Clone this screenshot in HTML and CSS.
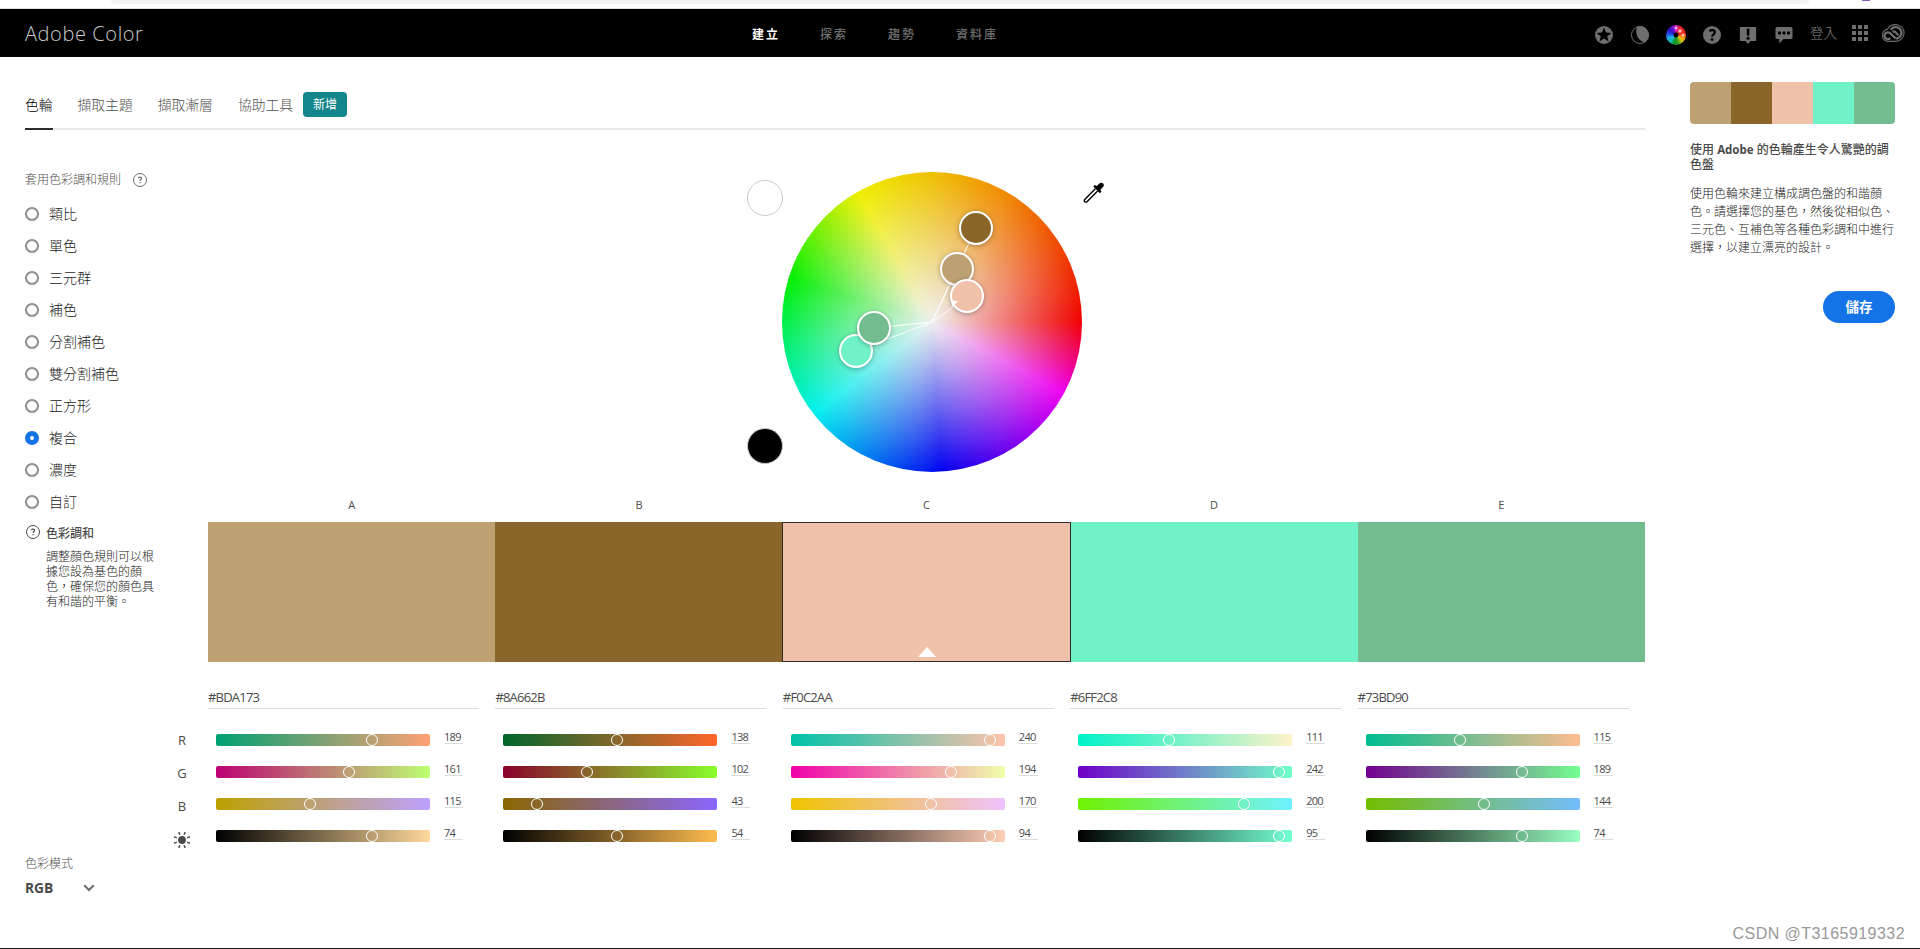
FILE: index.html
```html
<!DOCTYPE html>
<html lang="zh-TW">
<head>
    <meta charset="UTF-8">
    <meta name="viewport" content="width=device-width, initial-scale=1.0">
    <title>Adobe Color</title>
    <link rel="stylesheet" href="styles.css">
</head>
<body>
    <div class="browser-edge">
        <div class="address-bar"></div>
        <div class="avatar"></div>
    </div>

    <header class="header">
        <div class="logo">Adobe Color</div>
        <nav class="nav">
            <a class="active">建立</a>
            <a>探索</a>
            <a>趨勢</a>
            <a>資料庫</a>
        </nav>
        <div class="tools">
            <svg width="18" height="18" viewBox="0 0 18 18"><circle cx="9" cy="9" r="9" fill="#6e6e6e"/><path d="M9 1.500l2 5.100 5.400.3-4.200 3.400 1.400 5.300L9 12.600l-4.600 3 1.400-5.300-4.200-3.400 5.400-.3z" fill="#000"/></svg>
            <svg width="18" height="18" viewBox="0 0 18 18"><circle cx="9" cy="9" r="8.500" fill="none" stroke="#6e6e6e"/><path d="M6 .5C3.500 8 7 14 13.500 16.700A9 9 0 0 0 6 .5z" fill="#6e6e6e"/></svg>
            <div class="color-icon"></div>
            <svg width="18" height="18" viewBox="0 0 18 18"><circle cx="9" cy="9" r="9" fill="#6e6e6e"/><path d="M6.300 5.200C8 3.700 11.800 3.700 11.800 6.300c0 2-2.600 2.200-2.600 4.400" fill="none" stroke="#000" stroke-width="2.200"/><circle cx="9.100" cy="13.500" r="1.400" fill="#000"/></svg>
            <svg width="18" height="18" viewBox="0 0 18 18"><path d="M1.500 1h15a.6.6 0 0 1 .6.600v12.800a.6.6 0 0 1-.6.600H11.500L9 18l-2.500-3h-5a.6.6 0 0 1-.6-.6V1.600a.6.6 0 0 1 .6-.6z" fill="#6e6e6e"/><path d="M7.600 2.800h3L10.200 9.800H8z"/><circle cx="9.100" cy="12.300" r="1.600"/></svg>
            <svg width="18" height="18" viewBox="0 0 18 18"><path d="M2 1h14a1.500 1.500 0 0 1 1.500 1.500v9A1.500 1.500 0 0 1 16 13H8.500L4.200 17.500V13H2A1.500 1.500 0 0 1 .5 11.500v-9A1.500 1.500 0 0 1 2 1z" fill="#6e6e6e"/><circle cx="4.500" cy="7" r="1.700"/><circle cx="9" cy="7" r="1.700"/><circle cx="13.500" cy="7" r="1.700"/></svg>
            <span class="login">登入</span>
            <svg class="apps" width="16" height="16" viewBox="0 0 16 16" fill="#6e6e6e"><path d="M0 0h4v4H0zM6 0h4v4H6zM12 0h4v4h-4zM0 6h4v4H0zM6 6h4v4H6zM12 6h4v4h-4zM0 12h4v4H0zM6 12h4v4H6zM12 12h4v4h-4z"/></svg>
            <svg class="cloud" width="24" height="18" viewBox="0 0 24 18" fill="none" stroke="#6e6e6e"><path d="M6.800 17.400A6.200 6.200 0 0 1 6.500 5.200C8 2.300 11 .6 14.700.6a8.400 8.400 0 0 1 0 16.800z" stroke-width="1.100"/><path d="M14.500 14.300 9.300 9.300a3.400 3.400 0 1 0 0 4.800" stroke-width="2.300"/><path d="M9.800 6A5.700 5.700 0 1 1 14.700 14.600M17.500 11.200 14.500 8.200a2 2 0 0 0-2.800 0" stroke-width="2.300"/></svg>
        </div>
    </header>

    <div class="page">
        <main class="main">
            <div class="tabs">
                <a class="tab active">色輪</a>
                <a class="tab">擷取主題</a>
                <a class="tab">擷取漸層</a>
                <a class="tab">協助工具</a>
                <span class="badge">新增</span>
            </div>

            <div class="workspace">
                <aside class="sidebar">
                    <div class="rule-title">
                        套用色彩調和規則
                        <svg class="help" width="14" height="14" viewBox="0 0 14 14"><circle cx="7" cy="7" r="6.500"/><path d="M5.400 5.200c.4-1.400 3.200-1.400 3.200.1 0 1.200-1.500 1.200-1.500 2.700M7.100 9v1.300" stroke-width="1.200"/></svg>
                    </div>
                    <ul class="rules">
                        <li>類比</li>
                        <li>單色</li>
                        <li>三元群</li>
                        <li>補色</li>
                        <li>分割補色</li>
                        <li>雙分割補色</li>
                        <li>正方形</li>
                        <li class="checked">複合</li>
                        <li>濃度</li>
                        <li>自訂</li>
                    </ul>
                    <div class="tip">
                        <svg class="help dark" width="14" height="14" viewBox="0 0 14 14"><circle cx="7" cy="7" r="6.500"/><path d="M5.400 5.200c.4-1.400 3.200-1.400 3.200.1 0 1.200-1.500 1.200-1.500 2.700M7.100 9v1.300" stroke-width="1.200"/></svg>
                        <div>
                            <h4>色彩調和</h4>
                            <p>調整顏色規則可以根據您設為基色的顏色，確保您的顏色具有和諧的平衡。</p>
                        </div>
                    </div>
                    <div class="mode-title">色彩模式</div>
                    <div class="mode">
                        RGB
                        <svg width="12" height="8" viewBox="0 0 12 8"><path d="M1.200 1.200 6 6l4.800-4.800" fill="none" stroke="#6e6e6e" stroke-width="2"/></svg>
                    </div>
                </aside>

                <section class="content">
                    <div class="wheel-row">
                        <div class="backgrounds">
                            <span class="bg-dot white"></span>
                            <span class="bg-dot black"></span>
                        </div>
                        <div class="wheel">
                            <svg class="spokes" width="300" height="300" viewBox="0 0 300 300"><path d="M150 150 194 56M150 150 175 97M150 150 184 126M150 150 74 179M150 150 92 156"/></svg>
                            <span class="marker marker-b"></span>
                            <span class="marker marker-a"></span>
                            <span class="marker marker-c"></span>
                            <span class="marker marker-d"></span>
                            <span class="marker marker-e"></span>
                        </div>
                        <svg class="dropper" width="22" height="22" viewBox="0 0 22 22"><path d="M12.300 6.800 2.200 16.900c-1 1-1.200 2-.5 2.800.8.700 1.800.5 2.800-.5L14.600 9.100" fill="#fff" stroke="#000" stroke-width="1.400"/><path d="M10.300 4.500 11.800 3l2 1L16.700 1.300C19-.6 22 2 20.400 4.500L17.400 7.700l1 2-1.500 1.500z" fill="#000"/></svg>
                    </div>

                    <div class="columns letters">
                        <span>A</span><span>B</span><span>C</span><span>D</span><span>E</span>
                    </div>
                    <div class="columns swatches" id="swatches"></div>

                    <div class="editor">
                        <div class="channels">
                            <span>R</span>
                            <span>G</span>
                            <span>B</span>
                            <svg width="18" height="18" viewBox="-9 -9 18 18"><circle r="3.900" fill="#4b4b4b"/><path d="M2.100-5.200 3.200-7.900M-2.100-5.200-3.200-7.900M2.100 5.200 3.200 7.900M-2.100 5.200-3.200 7.900M5.200-2.100 7.900-3.200M5.200 2.100 7.900 3.200M-5.200-2.100-7.900-3.200M-5.200 2.100-7.900 3.200" stroke="#4b4b4b" stroke-width="1.500"/></svg>
                        </div>
                        <div class="columns panels" id="panels"></div>
                    </div>
                </section>
            </div>
        </main>

        <aside class="theme">
            <div class="palette" id="palette"></div>
            <h3>使用 <b>Adobe</b> 的色輪產生令人驚艷的調色盤</h3>
            <p>使用色輪來建立構成調色盤的和諧顏色。請選擇您的基色，然後從相似色、三元色、互補色等各種色彩調和中進行選擇，以建立漂亮的設計。</p>
            <button>儲存</button>
        </aside>
    </div>

    <div class="watermark">CSDN @T3165919332</div>
    <script src="script.js"></script>
</body>
</html>
```
FILE: script.js
```js
const colors = [
    { rgb: [189, 161, 115], brightness: 74 },
    { rgb: [138, 102, 43], brightness: 54 },
    { rgb: [240, 194, 170], brightness: 94, selected: true },
    { rgb: [111, 242, 200], brightness: 95 },
    { rgb: [115, 189, 144], brightness: 74 }
];

const swatches = document.getElementById('swatches');
const panels = document.getElementById('panels');
const palette = document.getElementById('palette');

function css(rgb) {
    return 'rgb(' + rgb.join(',') + ')';
}

function hex(rgb) {
    return '#' + rgb.map(v => v.toString(16).padStart(2, '0')).join('').toUpperCase();
}

function slider(from, to, percent, value) {
    return `<div class="slider">
        <div class="track" style="background: linear-gradient(to right, ${css(from)}, ${css(to)})">
            <span class="knob" style="left: ${percent}%"></span>
        </div>
        <span class="value">${value}</span>
    </div>`;
}

colors.forEach(color => {
    const rgb = color.rgb;
    swatches.innerHTML += `<div class="swatch${color.selected ? ' selected' : ''}" style="background: ${css(rgb)}"></div>`;
    palette.innerHTML += `<span style="background: ${css(rgb)}"></span>`;

    let html = `<div class="hex">${hex(rgb)}</div>`;
    // RGB 滑桿
    rgb.forEach((value, i) => {
        const from = rgb.slice();
        const to = rgb.slice();
        from[i] = 0;
        to[i] = 255;
        html += slider(from, to, value / 255 * 100, value);
    });
    // 亮度滑桿
    const max = Math.max(...rgb);
    html += slider([0, 0, 0], rgb.map(v => Math.round(v / max * 255)), color.brightness, color.brightness);
    panels.innerHTML += `<div class="panel">${html}</div>`;
});
```
FILE: styles.css
```css
*, *::before, *::after {
    box-sizing: border-box;
}
body {
    margin: 0;
    height: 949px;
    overflow: hidden;
    position: relative;
    display: flex;
    flex-direction: column;
    background-color: #fff;
    border-bottom: 1px solid #1c1c1c;
    color: #4b4b4b;
    font-family: "Noto Sans", "Noto Sans CJK TC", sans-serif;
    font-size: 12px;
}
h3, h4, p, ul {
    margin: 0;
    padding: 0;
}
.browser-edge {
    height: 9px;
    flex-shrink: 0;
    display: flex;
    align-items: flex-start;
    padding-left: 111px;
    border-bottom: 1px solid #dadce0;
}
.address-bar {
    width: 1698px;
    height: 4px;
    background-color: #f1f3f4;
    border-radius: 0 0 8px 8px;
}
.avatar {
    width: 8px;
    height: 1px;
    margin-left: 53px;
    background-color: #7e57c2;
}

/* 頂部導覽 */
.header {
    height: 48px;
    flex-shrink: 0;
    display: grid;
    grid-template-columns: 752px 1fr auto;
    align-items: center;
    padding-right: 15px;
    background-color: #000;
}
.logo {
    padding-left: 25px;
    color: #cacaca;
    font-family: "Open Sans", sans-serif;
    font-size: 20px;
    font-weight: 300;
    letter-spacing: 0.6px;
}
.nav {
    display: flex;
    gap: 40px;
    padding-top: 2px;
    color: #6e6e6e;
    font-weight: 500;
    letter-spacing: 2px;
}
.nav .active {
    color: #fff;
    font-weight: 700;
}
.tools {
    display: flex;
    align-items: center;
    gap: 18px;
    padding-top: 4px;
}
.color-icon {
    width: 20px;
    height: 20px;
    margin: 0 -1px;
    border-radius: 50%;
    background:
        radial-gradient(circle, #000 0 2px, transparent 3px),
        radial-gradient(circle at 10px 3px, #fff 0, transparent 2px),
        radial-gradient(circle at 14px 6px, #fff 0, transparent 2.5px),
        radial-gradient(circle at 17px 10px, #fff 0, transparent 2px),
        conic-gradient(#d020c0, #e8202c 30deg, #f02818 80deg, #f0a010 110deg, #d8c010 135deg, #30a020 165deg, #109020 190deg, #10b8b0 220deg, #20b0f0 250deg, #2050e0 275deg, #3010c0 310deg, #8010d0 340deg, #d020c0);
}
.login {
    margin: -5px 0 0 -1px;
    color: #8a8a8a;
    font-size: 13.5px;
    font-weight: 300;
    line-height: 18px;
}
.apps {
    margin: -5px 0 0 -3px;
}
.cloud {
    margin: -5px 0 0 -5px;
}

/* 版面 */
.page {
    flex: 1;
    display: grid;
    grid-template-columns: 1620px 205px;
    column-gap: 45px;
    padding-left: 25px;
}
.tabs {
    height: 73px;
    display: flex;
    align-items: flex-end;
    border-bottom: 2px solid #e9e9e9;
    color: #505050;
}
.tab {
    height: 38px;
    margin: 0 25px -2px 0;
    padding-top: 3px;
    line-height: 20px;
    font-size: 13.8px;
    font-weight: 300;
}
.tab.active {
    width: 28px;
    margin-right: 24.5px;
    border-bottom: 2px solid #2c2c2c;
    color: #000;
}
.badge {
    width: 44px;
    height: 25px;
    margin: 0 0 11px -15px;
    border-radius: 4px;
    background-color: #12868b;
    color: #fff;
    font-weight: 400;
    line-height: 26px;
    text-align: center;
}
.workspace {
    display: grid;
    grid-template-columns: 183px 1437px;
}

/* 調和規則 */
.sidebar {
    padding-top: 39px;
}
.rule-title {
    height: 20px;
    display: flex;
    align-items: center;
    gap: 12px;
    color: #505050;
    font-weight: 300;
}
.help {
    fill: none;
    stroke: #6e6e6e;
    position: relative;
    top: 1px;
}
.help.dark {
    stroke: #4b4b4b;
    top: 0;
}
.rules {
    margin-top: 9px;
    list-style: none;
    color: #222;
    font-size: 14px;
    font-weight: 300;
}
.rules li {
    height: 32px;
    display: flex;
    align-items: center;
    line-height: 20px;
}
.rules li::before {
    content: "";
    width: 14px;
    height: 14px;
    margin: 0 10px 0 0;
    border: 2px solid #8e8e8e;
    border-radius: 50%;
    background-color: #fafafa;
}
.rules .checked::before {
    border: 5px solid #1473e6;
    background-color: #fff;
}
.tip {
    width: 132px;
    display: flex;
    gap: 6px;
    margin: 7px 0 0 1px;
    line-height: 15px;
}
.tip h4 {
    font-size: 12px;
    font-weight: 500;
    padding-top: 1px;
}
.tip svg {
    flex-shrink: 0;
}
.tip p {
    width: 110px;
    margin-top: 8px;
    color: #222;
    font-weight: 300;
}
.mode-title {
    margin-top: 246px;
    line-height: 18px;
    color: #505050;
    font-weight: 300;
}
.mode {
    display: flex;
    align-items: center;
    gap: 30px;
    margin-top: 5px;
    font-family: "Open Sans", sans-serif;
    font-size: 13.8px;
    font-weight: 700;
    line-height: 20px;
}

/* 色輪 */
.wheel-row {
    height: 365px;
    display: flex;
    padding: 42px 0 0 539px;
}
.backgrounds {
    width: 35px;
    height: 300px;
    display: flex;
    flex-direction: column;
    justify-content: space-between;
    padding: 8px 0;
}
.bg-dot {
    width: 36px;
    height: 36px;
    border: 1px solid #cacaca;
    border-radius: 50%;
    background-color: #fff;
}
.bg-dot.black {
    background-color: #000;
}
.wheel {
    position: relative;
    width: 300px;
    height: 300px;
    border-radius: 50%;
    background:
        radial-gradient(circle closest-side, rgb(240, 240, 240), rgba(240, 240, 240, 0)),
        conic-gradient(from 90deg,
            #f00000, hsl(329 100% 47%) 15deg, hsl(300 100% 47%) 28deg,
            hsl(267 100% 47%) 60deg, hsl(240 100% 47%) 86deg,
            hsl(204 100% 47%) 120deg, hsl(180 100% 47%) 142deg,
            hsl(138 100% 47%) 180deg, hsl(120 100% 47%) 197deg, hsl(103 100% 47%) 210deg,
            hsl(60 100% 47%) 240deg, hsl(48 100% 47%) 270deg, hsl(34 100% 47%) 300deg,
            hsl(17 100% 47%) 330deg, #f00000);
}
.spokes {
    display: block;
    stroke: #fff;
    fill: none;
}
.marker {
    position: absolute;
    width: 34px;
    height: 34px;
    margin: -17px 0 0 -17px;
    border: 2px solid #fff;
    border-radius: 50%;
    box-shadow: 0 1px 5px rgba(0, 0, 0, 0.3);
}
.marker-a {
    left: 175px;
    top: 97px;
    background-color: #bda173;
}
.marker-b {
    left: 194px;
    top: 56px;
    background-color: #8a662b;
}
.marker-c {
    left: 185px;
    top: 124px;
    background-color: #f0c2aa;
}
.marker-c::after {
    content: "";
    position: absolute;
    left: 0;
    top: 20px;
    border: 3px solid #fff;
    border-right-color: transparent;
    border-bottom-color: transparent;
    transform: rotate(5deg);
}
.marker-d {
    left: 74px;
    top: 179px;
    background-color: #6ff2c8;
}
.marker-e {
    left: 92px;
    top: 156px;
    background-color: #73bd90;
}
.dropper {
    margin: 10px 0 0 1px;
}

/* 色票 */
.columns {
    display: grid;
    grid-template-columns: repeat(5, 1fr);
}
.letters {
    height: 27px;
    padding-top: 1px;
    font-family: "Open Sans", sans-serif;
    font-size: 11px;
    line-height: 18px;
    text-align: center;
}
.swatches {
    height: 140px;
}
.swatch.selected {
    display: flex;
    align-items: flex-end;
    justify-content: center;
    margin: 0 -1px;
    padding-bottom: 4px;
    border: 1px solid #2c2c2c;
    z-index: 1;
}
.swatch.selected::after {
    content: "";
    width: 18px;
    margin-left: 1px;
    border: 9px solid transparent;
    border-top: 0;
    border-bottom: 10px solid #fff;
}
.editor {
    display: flex;
    margin-left: -35px;
}
.channels {
    width: 18px;
    flex-shrink: 0;
    display: flex;
    flex-direction: column;
    align-items: center;
    gap: 13px;
    margin: 68px 17px 0 0;
    font-family: "Open Sans", sans-serif;
    font-size: 13px;
    line-height: 20px;
}
.channels svg {
    margin-top: 2px;
}
.panels {
    flex: 1;
}
.panel {
    width: 271px;
}
.hex {
    height: 47px;
    margin-bottom: 25px;
    padding-top: 25px;
    border-bottom: 1px solid #dcdcdc;
    font-family: "Open Sans", sans-serif;
    font-size: 13px;
    line-height: 20px;
    letter-spacing: -0.8px;
}
.slider {
    display: flex;
    height: 32px;
    padding-left: 8px;
}
.track {
    position: relative;
    width: 214px;
    height: 12px;
    border-radius: 2px;
}
.knob {
    position: absolute;
    top: 0;
    width: 12px;
    height: 12px;
    margin-left: -8.3px;
    border: 1px solid #fff;
    border-radius: 50%;
}
.value {
    width: 19px;
    height: 14px;
    margin: -4px 0 0 14px;
    border-bottom: 1px solid #dcdcdc;
    font-family: "Open Sans", sans-serif;
    font-size: 11px;
    line-height: 14px;
    letter-spacing: -0.7px;
}

/* 右側 */
.theme {
    padding-top: 25px;
}
.palette {
    height: 42px;
    display: flex;
    overflow: hidden;
    border-radius: 4px;
}
.palette span {
    flex: 1;
}
.theme h3 {
    margin-top: 18px;
    font-size: 12px;
    font-weight: 500;
    line-height: 15px;
}
.theme h3 b {
    font-size: 11.5px;
}
.theme p {
    margin-top: 13px;
    color: #222;
    font-weight: 300;
    line-height: 18px;
}
.theme button {
    display: block;
    width: 72px;
    height: 32px;
    margin: 34px 0 0 auto;
    padding: 0 0 2px;
    border: none;
    border-radius: 16px;
    background-color: #1473e6;
    color: #fff;
    font-family: inherit;
    font-size: 13.5px;
    font-weight: 700;
}
.watermark {
    position: absolute;
    right: 15px;
    bottom: 5px;
    color: #999;
    font-family: "Liberation Sans", sans-serif;
    font-size: 16px;
    letter-spacing: 0.45px;
}
```
